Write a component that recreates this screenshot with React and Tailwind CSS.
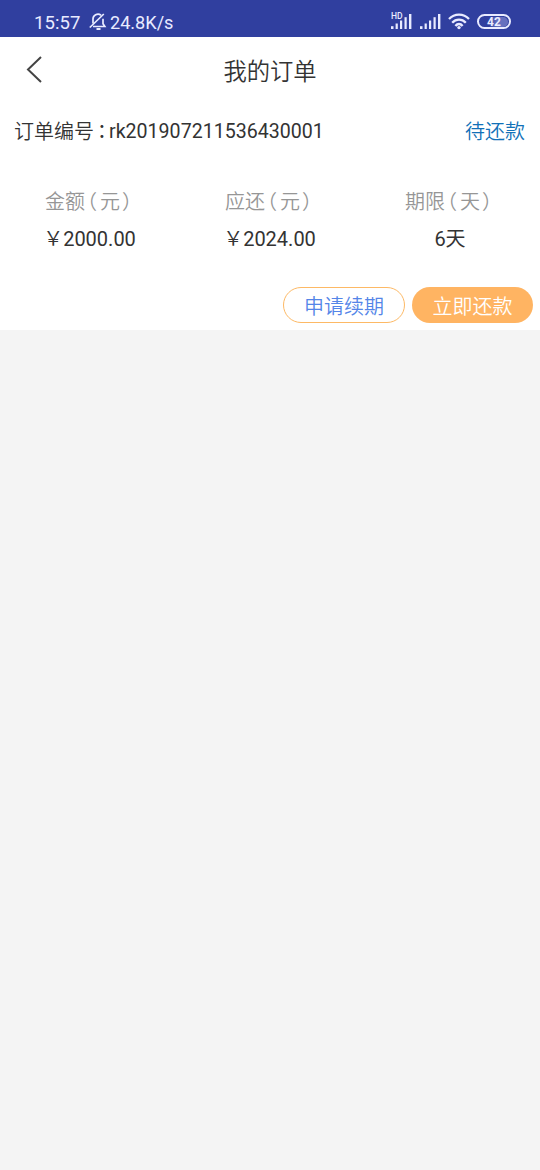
import React from "react";

const columns = [
  { label: "金额", unit: "元", money: true, value: "2000.00" },
  { label: "应还", unit: "元", money: true, value: "2024.00" },
  { label: "期限", unit: "天", money: false, value: "6天" },
];

function Signal({ hd }) {
  return (
    <svg className="overflow-visible" width="21" height="18" viewBox="0 0 21 18" fill="#e9ebff">
      <rect x="0" y="13.2" width="2.5" height="2.8" />
      <rect x="4.6" y="10.5" width="2.2" height="5.5" />
      <rect x="9" y="7.5" width="2.2" height="8.5" />
      <rect x="13.5" y="4.2" width="2.2" height="11.8" />
      <rect x="18" y="1" width="2.4" height="15" />
      {hd && (
        <text x="0" y="6" fontSize="8.5" fontWeight="500" fontFamily="Roboto, sans-serif">
          HD
        </text>
      )}
    </svg>
  );
}

function StatusBar() {
  return (
    <div className="flex h-[37px] items-start justify-between bg-[#303f9f] pr-[28px] pl-[33px] text-[#e9ebff]">
      <div className="flex pt-[10px] text-[18.5px] leading-[26px]">
        <span className="w-[56px] pl-[1px] tracking-[0.1px]">15:57</span>
        <svg className="mt-[3px] mr-[3px]" width="18" height="18" viewBox="0 0 18 18" fill="none" stroke="#e9ebff" strokeWidth="1.7">
          <path d="M4 13.500H15.800L14 10.800V5.800M4 10.500V6.500a5 5 0 0 1 8-4.300" />
          <path d="M0.800 14.500L14.800 1" />
          <path d="M7.500 16h4" strokeWidth="2" />
        </svg>
        <span className="text-[18.1px]">24.8K/s</span>
      </div>
      <div className="flex items-start pt-[13px]">
        <div className="mr-[8px]">
          <Signal hd />
        </div>
        <div className="mr-[7px]">
          <Signal />
        </div>
        <svg className="mr-[8px]" width="22" height="17" viewBox="0 0 22 17" fill="none" stroke="#e9ebff" strokeWidth="2.3">
          <path d="M1 6C6.500 .2 15.500 .2 21 6" />
          <path d="M4.200 9.700C8 5.600 14 5.600 17.800 9.700" />
          <path d="M7.400 13C9.500 10.300 12.500 10.300 14.600 13" />
          <circle cx="11" cy="14.600" r="1.700" fill="#e9ebff" stroke="none" />
        </svg>
        <div className="mt-[1px] -ml-[1px] mr-[1px] flex h-[15px] w-[34px] items-center justify-center rounded-full border-2 border-[#e9ebff] p-[1px]">
          <div className="flex h-[10px] w-[27px] items-center justify-center rounded-full bg-linear-to-r from-[#303f9f] from-30% to-[#6670be] to-60% text-[12px] leading-none font-bold">
            42
          </div>
        </div>
      </div>
    </div>
  );
}

function App() {
  return (
    <div className="min-h-screen bg-[#f4f4f4] font-['Roboto','Noto_Sans_CJK_SC',sans-serif] text-[#333333]">
      <StatusBar />
      <div className="h-[293px] bg-white">
        <header className="grid h-[66px] grid-cols-[90px_1fr_90px] items-center">
          <svg className="ml-[26px]" width="17" height="28" viewBox="0 0 17 28" fill="none" stroke="#444444" strokeWidth="2">
            <path d="M15 1L2 13.500L15 26" />
          </svg>
          <h1 className="pt-[4px] text-center text-[23.3px] font-[350]">我的订单</h1>
        </header>

        <div className="flex h-[56px] items-center justify-between px-[15px] pt-[2px] text-[19.6px]">
          <div className="flex items-center">
            <span className="-ml-[1px] mr-[1px] text-[20px] font-[350]">订单编号</span>
            <span className="w-[14px] pl-[2px] [font-feature-settings:'halt']">：</span>
            <span>rk201907211536430001</span>
          </div>
          <span className="text-[20px] font-[350] text-[#1171b8]">待还款</span>
        </div>

        <div className="grid grid-cols-3 pt-[23px] text-center text-[20px]">
          {columns.map((col) => (
            <div key={col.label}>
              <div className="flex h-[38px] items-center justify-center pt-[2px] font-[350] text-[#969696]">
                <span>{col.label}</span>
                <span className="pr-[3px] pl-[2px] [font-feature-settings:'halt']">（</span>
                <span>{col.unit}</span>
                <span className="pr-[3px] pl-[2px] [font-feature-settings:'halt']">）</span>
              </div>
              <div className="flex h-[38px] items-center justify-center">
                {col.money && <span className="-ml-[1px] font-[350]">￥</span>}
                <span>{col.value}</span>
              </div>
            </div>
          ))}
        </div>

        <div className="flex justify-end gap-[7px] pt-[29px] pr-[7px] text-[20px] font-[350]">
          <button className="h-[36px] w-[122px] rounded-full border border-[#fdb965] pt-[3px] text-[#5485e8]">申请续期</button>
          <button className="h-[36px] w-[121px] rounded-full bg-[#ffb462] pt-[3px] text-white">立即还款</button>
        </div>
      </div>
    </div>
  );
}

export default App;
